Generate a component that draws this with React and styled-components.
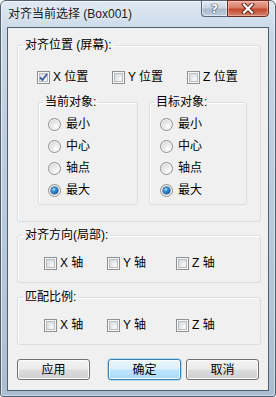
import React from "react";
import styled, { createGlobalStyle } from "styled-components";

const GlobalStyle = createGlobalStyle`
  html, body {
    margin: 0;
    padding: 0;
  }
  body {
    width: 276px;
    height: 397px;
    overflow: hidden;
    font-family: "Liberation Sans", "Noto Sans CJK SC", sans-serif;
    font-size: 12px;
    color: #000;
  }
`;

const CheckMark = () => (
  <svg width="9" height="9" viewBox="0 0 9 9">
    <path d="M1 4.5 L3.5 7 L8 1" fill="none" stroke="#3d5d9a" strokeWidth="1.8" />
  </svg>
);

const CloseGlyph = () => (
  <svg width="14" height="11" viewBox="0 0 14 11">
    <path d="M3 1.5 L11 9.5 M11 1.5 L3 9.5" stroke="#5a1d14" strokeWidth="4" strokeLinecap="square" />
    <path d="M3 1.5 L11 9.5 M11 1.5 L3 9.5" stroke="#fff" strokeWidth="2.2" strokeLinecap="square" />
  </svg>
);

const Checkbox = ({ checked, children }) => (
  <CheckItem>
    <Box>{checked && <CheckMark />}</Box>
    <span>{children}</span>
  </CheckItem>
);

const Radio = ({ checked, children }) => (
  <RadioItem>
    <Circle>{checked && <Dot />}</Circle>
    <span>{children}</span>
  </RadioItem>
);

const RadioGroup = ({ title, inset }) => (
  <SubGroup>
    <SubLegend>{title}</SubLegend>
    <RadioList $inset={inset}>
      <Radio>最小</Radio>
      <Radio>中心</Radio>
      <Radio>轴点</Radio>
      <Radio checked>最大</Radio>
    </RadioList>
  </SubGroup>
);

const App = () => {
  return (
    <>
      <GlobalStyle />
      <Window>
        <TitleBar>
          <Title>对齐当前选择 (Box001)</Title>
          <HelpButton>?</HelpButton>
          <CloseButton>
            <CloseGlyph />
          </CloseButton>
        </TitleBar>
        <Client>
          <Group $top={10}>
            <Legend>对齐位置 (屏幕):</Legend>
            <CheckRow $cols="75px 75px auto" $left={19} $top={18} $bottom={0}>
              <Checkbox checked>X 位置</Checkbox>
              <Checkbox>Y 位置</Checkbox>
              <Checkbox>Z 位置</Checkbox>
            </CheckRow>
            <SubRow>
              <RadioGroup title="当前对象:" inset={9} />
              <RadioGroup title="目标对象:" inset={10} />
            </SubRow>
          </Group>
          <Group $top={6}>
            <Legend>对齐方向(局部):</Legend>
            <CheckRow $cols="63px 69px auto" $left={26} $top={14} $bottom={12}>
              <Checkbox>X 轴</Checkbox>
              <Checkbox>Y 轴</Checkbox>
              <Checkbox>Z 轴</Checkbox>
            </CheckRow>
          </Group>
          <Group $top={7}>
            <Legend>匹配比例:</Legend>
            <CheckRow $cols="63px 69px auto" $left={26} $top={14} $bottom={12}>
              <Checkbox>X 轴</Checkbox>
              <Checkbox>Y 轴</Checkbox>
              <Checkbox>Z 轴</Checkbox>
            </CheckRow>
          </Group>
          <ButtonRow>
            <Button $gapAfter={18}>应用</Button>
            <Button $primary $gapAfter={5}>确定</Button>
            <Button>取消</Button>
          </ButtonRow>
        </Client>
      </Window>
    </>
  );
};

export default App;

const Window = styled.div`
  width: 276px;
  height: 397px;
  box-sizing: border-box;
  display: flex;
  flex-direction: column;
  border: 1px solid #51606f;
  border-radius: 6px 6px 3px 3px;
  padding: 0 6px 5px 6px;
  background: linear-gradient(
    180deg,
    #dfe8f2 0%,
    #c9d8e8 8%,
    #bccde0 40%,
    #b3c6da 75%,
    #aabdd1 100%
  );
  box-shadow: inset 1px 1px 0 rgba(255, 255, 255, 0.6),
    inset -1px -1px 0 rgba(255, 255, 255, 0.4);
`;

const TitleBar = styled.div`
  height: 26px;
  display: flex;
  align-items: flex-start;
  margin-right: 0;
`;

const Title = styled.div`
  margin: 6px 0 0 1px;
  font-size: 12px;
  line-height: 14px;
  color: #1b1b1b;
  white-space: nowrap;
  text-shadow: 0 0 6px rgba(255, 255, 255, 0.9);
`;

const CaptionButton = styled.div`
  height: 17px;
  box-sizing: border-box;
  display: flex;
  align-items: center;
  justify-content: center;
  margin-top: -1px;
`;

const HelpButton = styled(CaptionButton)`
  margin-left: auto;
  width: 26px;
  border: 1px solid #56677a;
  border-right: none;
  border-radius: 0 0 0 4px;
  background: linear-gradient(
    180deg,
    #e3eaf2 0%,
    #c8d4e1 48%,
    #a9b9ca 52%,
    #bfcddc 100%
  );
  box-shadow: inset 0 0 0 1px rgba(255, 255, 255, 0.5);
  font-family: "DejaVu Sans", sans-serif;
  font-weight: bold;
  font-size: 12px;
  line-height: 14px;
  color: #fff;
  text-shadow: 0 0 1px #2c3a4a, 0 0 1px #2c3a4a, 0 0 1px #2c3a4a;
`;

const CloseButton = styled(CaptionButton)`
  width: 42px;
  border: 1px solid #6a2a1f;
  border-radius: 0 0 4px 0;
  background: linear-gradient(
    180deg,
    #e9a898 0%,
    #d77a64 48%,
    #c1462c 52%,
    #d2846a 100%
  );
  box-shadow: inset 0 0 0 1px rgba(255, 220, 210, 0.45);
`;

const Client = styled.div`
  flex: 1;
  display: flex;
  flex-direction: column;
  box-sizing: border-box;
  border: 1px solid #4f5f70;
  background: #f0f0f0;
  padding: 0 7px 0 9px;
`;

const Group = styled.fieldset`
  margin: ${(p) => p.$top}px 0 0 0;
  padding: 0;
  min-width: 0;
  border: 1px solid #d5dfe5;
  border-radius: 3px;
  box-shadow: inset 1px 1px 0 #fff;
`;

const Legend = styled.legend`
  margin-left: 5px;
  padding: 0 2px;
  font-size: 12px;
  line-height: 14px;
  color: #000;
`;

const CheckRow = styled.div`
  display: grid;
  grid-template-columns: ${(p) => p.$cols};
  padding: ${(p) => p.$top}px 0 ${(p) => p.$bottom}px ${(p) => p.$left}px;
`;

const CheckItem = styled.div`
  display: flex;
  align-items: center;
  gap: 3px;
  height: 14px;
  font-size: 12px;
  line-height: 14px;
  white-space: nowrap;
`;

const Box = styled.span`
  width: 13px;
  height: 13px;
  box-sizing: border-box;
  flex: none;
  display: flex;
  align-items: center;
  justify-content: center;
  border: 1px solid #8e8f8f;
  background: #f4f4f4;
  box-shadow: inset 0 0 0 1px #f8f8f8, inset 0 0 0 2px #b9bcc1,
    inset 2px 2px 3px 2px #dcdee2;
`;

const SubRow = styled.div`
  display: flex;
  gap: 11px;
  padding: 11px 0 16px 20px;
`;

const SubGroup = styled.fieldset`
  margin: 0;
  padding: 0;
  width: ${(p) => (p.$wide ? 100 : 100)}px;
  box-sizing: border-box;
  min-width: 0;
  border: 1px solid #d5dfe5;
  border-radius: 3px;
  box-shadow: inset 1px 1px 0 #fff;
  &:last-child {
    width: 98px;
  }
`;

const SubLegend = styled(Legend)`
  margin-left: 4px;
`;

const RadioList = styled.div`
  display: flex;
  flex-direction: column;
  padding: 4px 0 3px ${(p) => p.$inset}px;
`;

const RadioItem = styled.div`
  display: flex;
  align-items: center;
  gap: 5px;
  height: 22px;
  font-size: 12px;
  line-height: 14px;
`;

const Circle = styled.span`
  width: 13px;
  height: 13px;
  box-sizing: border-box;
  flex: none;
  border-radius: 50%;
  border: 1px solid #8e8f8f;
  display: flex;
  align-items: center;
  justify-content: center;
  background: radial-gradient(circle at 65% 70%, #ffffff 0%, #e6e6e6 45%, #c9cbcf 100%);
  box-shadow: inset 0 0 0 1px #f6f6f6;
`;

const Dot = styled.span`
  width: 7px;
  height: 7px;
  border-radius: 50%;
  background: radial-gradient(circle at 40% 35%, #b7e3fb 0%, #2a8ad4 35%, #0b4484 100%);
  box-shadow: 0 0 0 0.5px #163f6e;
`;

const ButtonRow = styled.div`
  display: flex;
  margin-top: 14px;
`;

const Button = styled.div`
  width: 73px;
  height: 21px;
  box-sizing: border-box;
  margin-right: ${(p) => p.$gapAfter || 0}px;
  display: flex;
  align-items: center;
  justify-content: center;
  border: 1px solid ${(p) => (p.$primary ? "#3c7fb1" : "#707070")};
  border-radius: 3px;
  font-size: 12px;
  line-height: 14px;
  color: #000;
  background: ${(p) =>
    p.$primary
      ? "linear-gradient(180deg, #eaf6fd 0%, #d9f0fc 48%, #bee6fd 52%, #a7d9f5 100%)"
      : "linear-gradient(180deg, #f2f2f2 0%, #ebebeb 48%, #dddddd 52%, #cfcfcf 100%)"};
  box-shadow: ${(p) =>
    p.$primary
      ? "inset 0 0 0 1px #fcfcfc, 0 0 0 0.5px #6ec4f0"
      : "inset 0 0 0 1px #fcfcfc"};
`;
